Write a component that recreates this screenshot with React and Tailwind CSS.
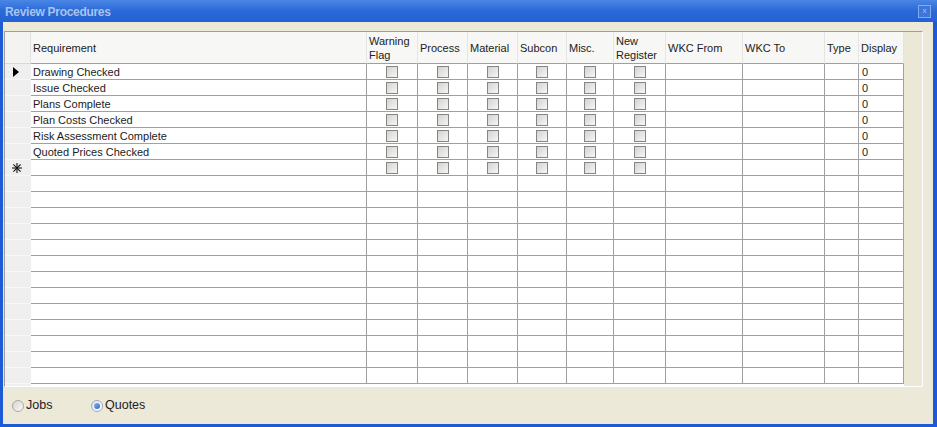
const columns = [
  { key: 'req', label: ['Requirement'], w: 'w-[336px]' },
  { key: 'warn', label: ['Warning', 'Flag'], w: 'w-[51px]', check: true },
  { key: 'proc', label: ['Process'], w: 'w-[50px]', check: true },
  { key: 'mat', label: ['Material'], w: 'w-[50px]', check: true },
  { key: 'sub', label: ['Subcon'], w: 'w-[49px]', check: true },
  { key: 'misc', label: ['Misc.'], w: 'w-[47px]', check: true },
  { key: 'newreg', label: ['New', 'Register'], w: 'w-[52px]', check: true },
  { key: 'from', label: ['WKC From'], w: 'w-[77px]' },
  { key: 'to', label: ['WKC To'], w: 'w-[82px]' },
  { key: 'type', label: ['Type'], w: 'w-[34px]' },
  { key: 'disp', label: ['Display'], w: 'w-[45px]' },
];

const requirements = [
  'Drawing Checked',
  'Issue Checked',
  'Plans Complete',
  'Plan Costs Checked',
  'Risk Assessment Complete',
  'Quoted Prices Checked',
];

function Checkbox() {
  return (
    <div className="w-[12px] h-[12px] border border-[#858585] bg-gradient-to-br from-[#d2d2cf] to-[#f7f7f5]" />
  );
}

function Star() {
  return (
    <svg width="10" height="10" viewBox="0 0 10 10">
      <g stroke="#111" strokeWidth="1.1" strokeLinecap="square">
        <line x1="5" y1="0.5" x2="5" y2="9.5" />
        <line x1="0.5" y1="5" x2="9.5" y2="5" />
        <line x1="1.8" y1="1.8" x2="8.2" y2="8.2" />
        <line x1="8.2" y1="1.8" x2="1.8" y2="8.2" />
      </g>
    </svg>
  );
}

function Row({ kind, text }) {
  // kind: 'current' | 'data' | 'new' | 'empty'
  const filled = kind === 'current' || kind === 'data';
  return (
    <div className="flex h-[16px]">
      <div className="w-[26px] h-full bg-[#efefef] border-b border-[#f7f7f7] flex items-center">
        {kind === 'current' && (
          <div className="ml-[8px] w-0 h-0 border-y-[5px] border-y-transparent border-l-[6px] border-l-black" />
        )}
        {kind === 'new' && (
          <div className="ml-[7px] flex">
            <Star />
          </div>
        )}
      </div>
      {columns.map((c) => (
        <div
          key={c.key}
          className={`${c.w} h-full bg-white border-r border-b border-[#a0a0a0] flex items-center ${
            c.check ? 'justify-center' : ''
          }`}
        >
          {c.key === 'req' && filled && <span className="pl-[2px] pt-[1px] leading-none">{text}</span>}
          {c.key === 'disp' && filled && <span className="pl-[3px] pt-[1px] leading-none">0</span>}
          {c.check && kind !== 'empty' && <Checkbox />}
        </div>
      ))}
    </div>
  );
}

function Radio({ checked }) {
  return checked ? (
    <div className="w-[12px] h-[12px] rounded-full border border-[#98a9c4] bg-gradient-to-br from-[#e6e6e6] to-white flex items-center justify-center">
      <div className="w-[6px] h-[6px] rounded-full bg-gradient-to-br from-[#8fb4f0] to-[#2a63d4]" />
    </div>
  ) : (
    <div className="w-[12px] h-[12px] rounded-full border border-[#a8a8a8] bg-gradient-to-br from-[#d4d4d0] to-[#fafaf8]" />
  );
}

export default function App() {
  const rows = [
    ...requirements.map((t, i) => ({ kind: i === 0 ? 'current' : 'data', text: t })),
    { kind: 'new' },
    ...Array.from({ length: 13 }, () => ({ kind: 'empty' })),
  ];

  return (
    <div className="w-[937px] h-[427px] bg-[#1d5ad6] flex flex-col font-['Liberation_Sans',Arial,sans-serif] text-[11px] text-[#1b1b1b]">
      <div className="h-[22px] flex items-center justify-between pl-[5px] pr-[6px] bg-gradient-to-b from-[#4a86e4] via-[#2a69d8] to-[#2462d4]">
        <span className="text-[12px] font-bold text-[#a8c3f2] tracking-[-0.3px] pt-[2px]">Review Procedures</span>
        <div className="w-[13px] h-[13px] border border-[#86a9e8] bg-[#3a76dc] flex items-center justify-center text-[8px] leading-none text-[#a8c3f2]">
          x
        </div>
      </div>

      <div className="flex-1 ml-[3px] mr-[4px] mb-[3px] bg-[#ece9d8] flex flex-col pt-[9px] pl-[1px] pr-[10px]">
        <div className="flex border border-t-[#9d9d9d] border-l-[#9d9d9d] border-b-white border-r-white">
          <div className="flex flex-col">
            <div className="flex h-[32px] bg-[#f7f7f5]">
              <div className="w-[26px] h-full border-b border-r border-b-[#d8d8d8] border-r-[#e2e2e2] bg-[#f3f3f1]" />
              {columns.map((c) => (
                <div
                  key={c.key}
                  className={`${c.w} h-full border-r border-b border-r-[#e4e4e2] border-b-[#a0a0a0] flex flex-col justify-center pl-[2px] pt-[1px] leading-[14px] text-[#222]`}
                >
                  {c.label.map((l) => (
                    <span key={l}>{l}</span>
                  ))}
                </div>
              ))}
            </div>
            {rows.map((r, i) => (
              <Row key={i} kind={r.kind} text={r.text} />
            ))}
            <div className="flex h-[2px]">
              <div className="w-[26px] bg-[#efefef]" />
              <div className="flex-1 bg-white" />
            </div>
          </div>
          <div className="flex-1 bg-[#ebe8d7]" />
        </div>

        <div className="flex-1 flex items-center pl-[8px] text-[12.5px] text-[#222]">
          <div className="w-[79px] flex items-center gap-[2px]">
            <Radio />
            <span>Jobs</span>
          </div>
          <div className="flex items-center gap-[2px]">
            <Radio checked />
            <span>Quotes</span>
          </div>
        </div>
      </div>
    </div>
  );
}
